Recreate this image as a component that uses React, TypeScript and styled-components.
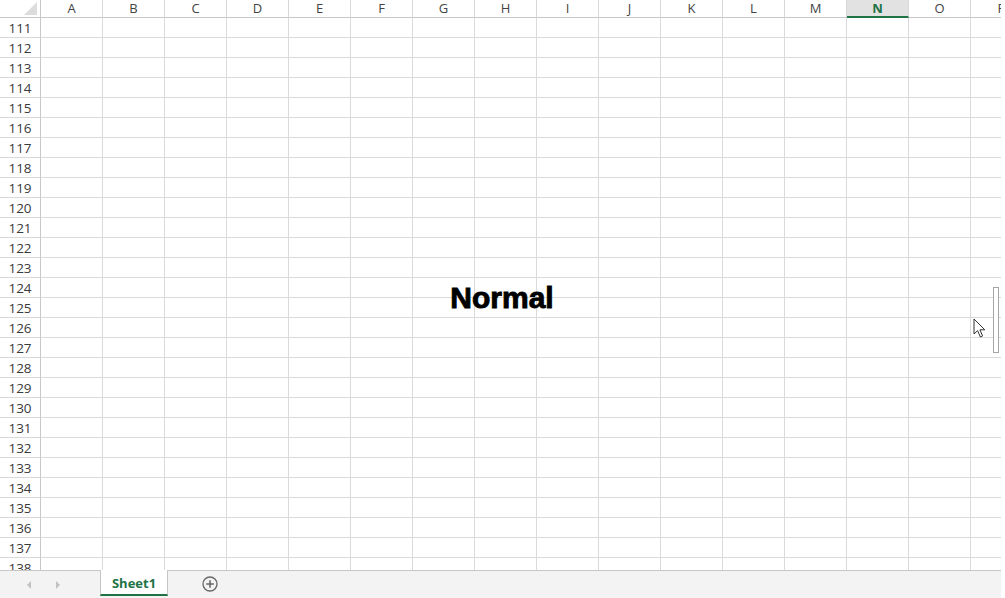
import React from "react";
import styled, { createGlobalStyle } from "styled-components";

const Global = createGlobalStyle`
  html, body { margin: 0; padding: 0; background: #ffffff; }
  body { font-family: "Open Sans", "Noto Sans", sans-serif; }
  * { box-sizing: border-box; }
`;

const Window = styled.div`
  width: 1001px;
  height: 598px;
  display: flex;
  flex-direction: column;
  overflow: hidden;
`;

const SheetArea = styled.div`
  position: relative;
  height: 570px;
  overflow: hidden;
`;

const Grid = styled.div`
  display: grid;
  grid-template-columns: 41px repeat(16, 62px);
  grid-template-rows: 18px;
  grid-auto-rows: 20px;
  width: 1033px;
`;

const Corner = styled.div`
  position: relative;
  border-right: 1px solid #c8c8c8;
  border-bottom: 1px solid #c8c8c8;
  &::after {
    content: "";
    position: absolute;
    right: 3px;
    bottom: 2px;
    width: 0;
    height: 0;
    border-left: 13px solid transparent;
    border-bottom: 13px solid #dcdcdc;
  }
`;

const ColHeader = styled.div<{ $selected?: boolean }>`
  display: flex;
  align-items: center;
  justify-content: center;
  font-size: 13px;
  line-height: 1;
  color: ${(p) => (p.$selected ? "#217346" : "#444444")};
  font-weight: ${(p) => (p.$selected ? 700 : 400)};
  background: ${(p) => (p.$selected ? "#e2e2e2" : "#ffffff")};
  border-right: 1px solid #d8d8d8;
  border-bottom: ${(p) => (p.$selected ? "2px solid #217346" : "1px solid #c8c8c8")};
  padding-top: ${(p) => (p.$selected ? "1px" : "0")};
`;

const RowHeader = styled.div`
  display: flex;
  align-items: center;
  justify-content: center;
  font-size: 13.5px;
  line-height: 1;
  color: #3a3a3a;
  border-right: 1px solid #c8c8c8;
  border-bottom: 1px solid #d8d8d8;
  padding-top: 3px;
`;

const Cell = styled.div`
  border-right: 1px solid #dadada;
  border-bottom: 1px solid #dadada;
`;

const Overlay = styled.div`
  position: absolute;
  left: 502px;
  top: 298px;
  transform: translate(-50%, -50%);
  font-family: "Liberation Sans", Arial, sans-serif;
  font-weight: 700;
  font-size: 30px;
  letter-spacing: 0px;
  color: #000000;
  white-space: nowrap;
  -webkit-text-stroke: 0.9px #000;
`;

const ScrollThumb = styled.div`
  position: absolute;
  left: 993px;
  top: 287px;
  width: 6px;
  height: 66px;
  background: #ffffff;
  border: 1px solid #a6a6a6;
`;

const Cursor = styled.svg`
  position: absolute;
  left: 973px;
  top: 318px;
`;

const TabBar = styled.div`
  height: 28px;
  display: flex;
  align-items: stretch;
  background: #f3f3f3;
  border-top: 1px solid #c6c6c6;
`;

const NavGroup = styled.div`
  width: 100px;
  display: flex;
  align-items: center;
  padding-left: 25px;
  gap: 21px;
`;

const NavArrow = styled.svg`
  display: block;
`;

const Tab = styled.div`
  width: 68px;
  margin-top: -1px;
  display: flex;
  align-items: center;
  justify-content: center;
  background: #ffffff;
  border-left: 1px solid #c6c6c6;
  border-right: 1px solid #c6c6c6;
  border-bottom: 2px solid #217346;
  margin-bottom: 2px;
  font-family: "Open Sans", "Noto Sans", sans-serif;
  font-weight: 700;
  font-size: 13px;
  color: #217346;
  padding-top: 1px;
`;

const AddButton = styled.div`
  width: 84px;
  display: flex;
  align-items: center;
  justify-content: center;
  padding-bottom: 1px;
`;

const columns = "ABCDEFGHIJKLMNOP".split("");
const rows = Array.from({ length: 28 }, (_, i) => 111 + i);

export default function App() {
  return (
    <Window>
      <Global />
      <SheetArea>
        <Grid>
          <Corner />
          {columns.map((c) => (
            <ColHeader key={c} $selected={c === "N"}>
              {c}
            </ColHeader>
          ))}
          {rows.map((r) => (
            <React.Fragment key={r}>
              <RowHeader>{r}</RowHeader>
              {columns.map((c) => (
                <Cell key={c} />
              ))}
            </React.Fragment>
          ))}
        </Grid>
        <Overlay>Normal</Overlay>
        <ScrollThumb />
        <Cursor width="14" height="21" viewBox="0 0 14 21">
          <path
            d="M1 1 L1 16 L4.6 12.6 L7.4 19 L9.6 18 L6.9 11.8 L11.8 11.8 Z"
            fill="#ffffff"
            stroke="#333333"
            strokeWidth="1"
            strokeLinejoin="miter"
          />
        </Cursor>
      </SheetArea>
      <TabBar>
        <NavGroup>
          <NavArrow width="8" height="10" viewBox="0 0 8 10">
            <path d="M6 1 L2 5 L6 9 Z" fill="#c2c2c2" />
          </NavArrow>
          <NavArrow width="8" height="10" viewBox="0 0 8 10">
            <path d="M2 1 L6 5 L2 9 Z" fill="#c2c2c2" />
          </NavArrow>
        </NavGroup>
        <Tab>Sheet1</Tab>
        <AddButton>
          <svg width="16" height="16" viewBox="0 0 16 16">
            <circle cx="8" cy="8" r="7" fill="none" stroke="#666666" strokeWidth="1.3" />
            <path d="M8 4.2 V11.8 M4.2 8 H11.8" stroke="#666666" strokeWidth="1.5" />
          </svg>
        </AddButton>
      </TabBar>
    </Window>
  );
}
